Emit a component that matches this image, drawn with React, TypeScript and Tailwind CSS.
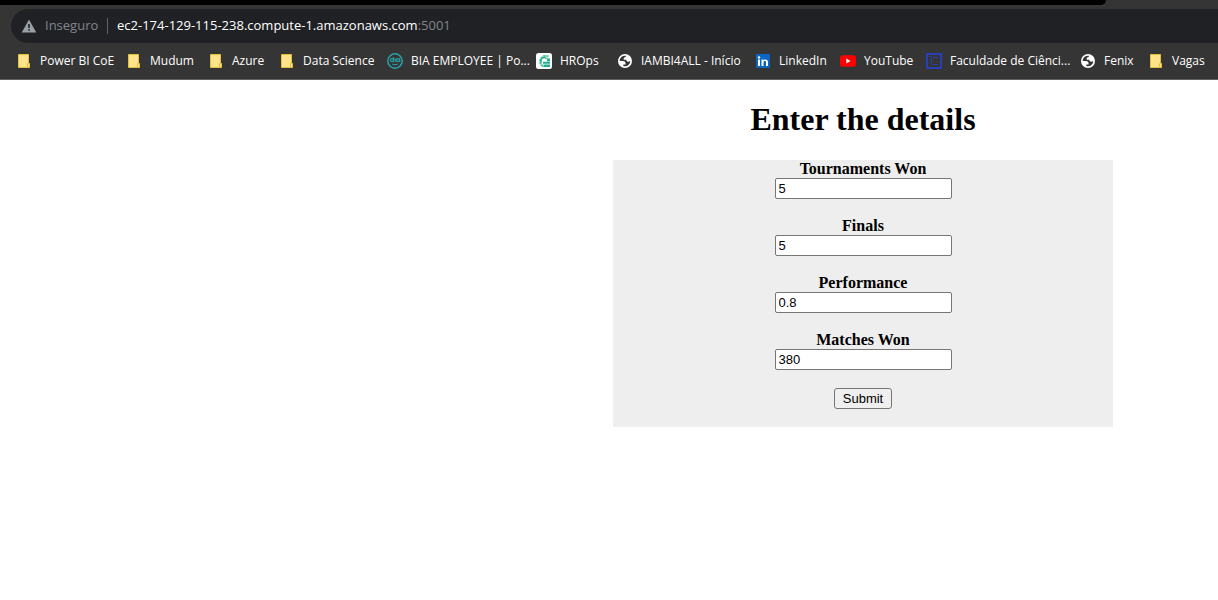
import React from "react";

function Folder() {
  return (
    <svg viewBox="0 0 16 16" className="size-4 shrink-0" aria-hidden="true">
      <path d="M2.500 1.500h10v9h1v4h-11z" fill="#ffe48c" stroke="#e6bf3c" />
      <path d="M11.500 14v-3.500h2" fill="none" stroke="#e6bf3c" />
    </svg>
  );
}

function Bia() {
  return (
    <svg viewBox="0 0 16 16" className="size-4 shrink-0" aria-hidden="true" fill="none" stroke="#27a3a8">
      <circle cx="8" cy="8" r="7.200" strokeWidth="1.500" />
      <circle cx="5" cy="7.200" r="1.500" strokeWidth="1.200" />
      <path d="M6.500 4.300v4.400M8.300 5.500v3.200M12.700 5.500v3.200" strokeWidth="1.200" />
      <circle cx="11" cy="7.200" r="1.500" strokeWidth="1.200" />
      <path d="M5.300 11q2.700 1.500 5.400 0" strokeWidth="1.200" />
    </svg>
  );
}

function HROps() {
  return (
    <svg viewBox="0 0 16 16" className="size-4 shrink-0" aria-hidden="true">
      <rect width="16" height="16" rx="2.500" fill="#fff" />
      <path d="M12.500 3.700A5.400 5.400 0 1 0 7 13.200" fill="none" stroke="#5cc4a0" strokeWidth="2.200" strokeDasharray="2.400 .5" />
      <path d="M5.300 9.500A3.200 3.200 0 0 1 10.500 5.800" fill="none" stroke="#2aae85" strokeWidth="1.400" />
      <path d="M11 5.500h3v2.800h-3zM7 8.800h7v2H7zM7.500 11.600H14V14H7.500z" fill="#20b08c" />
    </svg>
  );
}

function Globe() {
  return (
    <svg viewBox="0 0 24 24" className="size-4 shrink-0" aria-hidden="true">
      <path
        fill="#fff"
        fillRule="evenodd"
        d="M12 1.500a10.500 10.500 0 1 0 0 21 10.500 10.500 0 0 0 0-21zM4 12h4.400c3.407.022 4.922 1.730 4.543 5.127H9.488v2.470a8.004 8.004 0 0 0 10.498-8.083C19.327 12.504 18.332 13 17 13c-2.137 0-3.206-.916-3.206-2.750h-3.748c-.274-2.728.683-4.092 2.870-4.092 0-.975.327-1.597.811-1.970A8.004 8.004 0 0 0 4 12z"
      />
    </svg>
  );
}

function LinkedIn() {
  return (
    <svg viewBox="0 0 16 16" className="size-4 shrink-0" aria-hidden="true">
      <rect x="1" y="1" width="14" height="14" rx="1" fill="#0a66c2" />
      <path d="M3 6.500h2V13H3zM6.500 6.500h1.900v.9c.9-1.500 4.600-1.500 4.600 1.700V13h-2V9.500c0-2-2.500-1.700-2.500 0V13h-2z" fill="#fff" />
      <circle cx="4" cy="4.400" r="1.200" fill="#fff" />
    </svg>
  );
}

function YouTube() {
  return (
    <svg viewBox="0 0 16 16" className="size-4 shrink-0" aria-hidden="true">
      <rect y="2.300" width="16" height="11.400" rx="2.800" fill="#f00" />
      <path d="M6.300 5.600 10.500 8l-4.200 2.400z" fill="#fff" />
    </svg>
  );
}

function Faculdade() {
  return (
    <svg viewBox="0 0 16 16" className="size-4 shrink-0" aria-hidden="true" fill="none" stroke="#2740b5">
      <rect x="1" y="1" width="14" height="14" strokeWidth="2" />
      <path d="M3.500 3.500h2M7 4.500h5M5.500 5.500v5M6.500 11.500h5.500M11.500 4v1.500" strokeWidth="1.200" />
    </svg>
  );
}

const bookmarks = [
  { label: "Power BI CoE", Icon: Folder, width: "w-[70px]" },
  { label: "Mudum", Icon: Folder, width: "w-[42px]" },
  { label: "Azure", Icon: Folder, width: "w-[31px]" },
  { label: "Data Science", Icon: Folder, width: "w-[68px]" },
  { label: "BIA EMPLOYEE | Po...", Icon: Bia, width: "w-[109px]" },
  { label: "HROps", Icon: HROps, width: "w-[41px]" },
  { label: "IAMBI4ALL - Início", Icon: Globe, width: "w-[98px]" },
  { label: "LinkedIn", Icon: LinkedIn, width: "w-[45px]" },
  { label: "YouTube", Icon: YouTube, width: "w-[46px]" },
  { label: "Faculdade de Ciênci...", Icon: Faculdade, width: "w-[114px]" },
  { label: "Fenix", Icon: Globe, width: "w-[28px]" },
  { label: "Vagas", Icon: Folder, width: "w-[32px]" },
];

const fields = [
  { id: "tournaments", label: "Tournaments Won", value: "5" },
  { id: "finals", label: "Finals", value: "5" },
  { id: "performance", label: "Performance", value: "0.8" },
  { id: "matches", label: "Matches Won", value: "380" },
];

function BrowserBar() {
  return (
    <header className="overflow-hidden border-b border-[#5f6063] bg-[#353535] font-['Open_Sans','Noto_Sans',sans-serif]">
      <div className="mr-28 h-[5px] rounded-br-md bg-black" />
      <div className="pt-1 pl-[11px]">
        <div className="flex h-[34px] items-center rounded-l-full bg-[#202124] pl-[10px] text-[13px] text-[#9aa0a6]">
          <svg viewBox="0 0 16 16" className="size-4 shrink-0" aria-hidden="true">
            <path d="M8 1.500 15.300 14.500H.7z" fill="#9aa0a6" />
            <path d="M7.200 6h1.600v4H7.200zM7.200 11.200h1.600v1.600H7.200z" fill="#202124" />
          </svg>
          <span className="ml-2 w-[54px] whitespace-nowrap text-[#80868b]">Inseguro</span>
          <span className="ml-2 h-4 w-px bg-[#5f6368]" />
          <p className="ml-[9px] whitespace-nowrap">
            <span className="text-white">ec2-174-129-115-238.compute-1.amazonaws.com</span>
            <span className="text-[#80868b]">:5001</span>
          </p>
        </div>
      </div>
      <nav aria-label="Bookmarks" className="flex h-9 items-center gap-4 pl-4">
        {bookmarks.map(({ label, Icon, width }) => (
          <a key={label} href="#" className="flex shrink-0 items-center gap-2 text-xs text-white">
            <Icon />
            <span className={`${width} whitespace-nowrap`}>{label}</span>
          </a>
        ))}
      </nav>
    </header>
  );
}

export default function App() {
  return (
    <div className="min-h-screen bg-white text-black">
      <BrowserBar />
      <main className="mr-[105px] ml-auto w-[500px] max-w-full pt-[21px] text-center font-['Liberation_Serif',serif]">
        <h1 className="text-[32px] leading-9 font-bold">Enter the details</h1>
        <form className="mt-[23px] flex flex-col items-center gap-[18px] bg-[#eee] pb-[18px]" onSubmit={(e) => e.preventDefault()}>
          {fields.map((field) => (
            <div key={field.id} className="flex flex-col items-center">
              <label htmlFor={field.id} className="text-base leading-[18px] font-bold">
                {field.label}
              </label>
              <input
                id={field.id}
                type="text"
                defaultValue={field.value}
                className="h-[21px] w-[177px] rounded-xs border border-[#767676] bg-white px-[3px] font-['Liberation_Sans',sans-serif] text-[13px]"
              />
            </div>
          ))}
          <button
            type="submit"
            className="h-[21px] w-[58px] rounded-[3px] border border-[#767676] bg-[#efefef] font-['Liberation_Sans',sans-serif] text-[13px] leading-4"
          >
            Submit
          </button>
        </form>
      </main>
    </div>
  );
}
